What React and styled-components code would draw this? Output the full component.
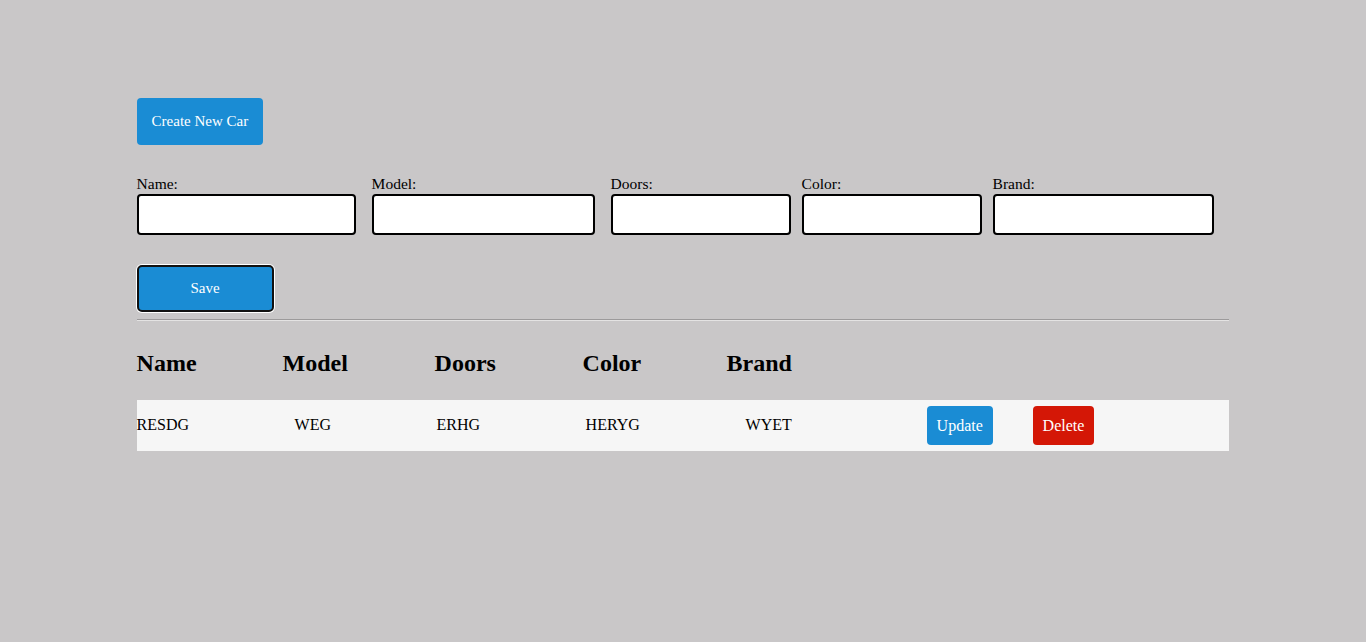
import styled, { createGlobalStyle } from 'styled-components'

const GlobalStyle = createGlobalStyle`
  html, body {
    margin: 0;
    padding: 0;
    background: #c9c7c8;
    font-family: "Liberation Serif", "Times New Roman", serif;
    color: #000;
  }
`

const Page = styled.div`
  width: 80%;
  margin: 0 auto;
  padding-top: 98px;
  padding-bottom: 190px;
`

const CreateButton = styled.button`
  display: block;
  height: 47px;
  padding: 0 15px;
  background: #1a8cd4;
  color: #fff;
  border: none;
  border-radius: 4px;
  font-family: inherit;
  font-size: 15px;
`

const FieldRow = styled.div`
  display: flex;
  margin-top: 30px;
`

const Field = styled.div`
  display: flex;
  flex-direction: column;
  margin-right: ${(p) => p.$gap || 0}px;
`

const Label = styled.label`
  font-size: 15.5px;
  line-height: 17px;
  padding-bottom: 2px;
`

const TextInput = styled.input`
  box-sizing: border-box;
  width: ${(p) => p.$w}px;
  height: 41px;
  border: 2px solid #000;
  border-radius: 4px;
  background: #fff;
`

const SaveButton = styled.button`
  display: block;
  box-sizing: border-box;
  width: 137px;
  height: 47px;
  margin-top: 30px;
  background: #1a8cd4;
  color: #fff;
  border: 2px solid #111;
  border-radius: 5px;
  box-shadow: 0 0 0 1px #fff;
  font-family: inherit;
  font-size: 15px;
`

const Divider = styled.hr`
  margin: 7px 0 0;
  border: none;
  border-top: 1px solid #9c9a9b;
  border-bottom: 1px solid #e4e3e3;
`

const HeaderRow = styled.div`
  display: grid;
  grid-template-columns: 146px 152px 148px 144px 1fr;
  margin: 28px 0 23px;
`

const HeaderCell = styled.h2`
  margin: 0;
  font-size: 24px;
  line-height: 28px;
  font-weight: bold;
`

const DataRow = styled.div`
  display: grid;
  grid-template-columns: 158px 142px 149px 160px 181px 106px 1fr;
  align-items: center;
  height: 51px;
  background: #f6f6f6;
`

const Cell = styled.div`
  font-size: 16px;
  line-height: 18px;
  padding-bottom: 1px;
`

const ActionButton = styled.button`
  justify-self: start;
  height: 39px;
  padding: 0 10px;
  border: none;
  border-radius: 4px;
  color: #fff;
  background: ${(p) => (p.$danger ? '#d41706' : '#1a8cd4')};
  font-family: inherit;
  font-size: 16px;
`

const fields = [
  { label: 'Name:', w: 219, gap: 16 },
  { label: 'Model:', w: 223, gap: 16 },
  { label: 'Doors:', w: 180, gap: 11 },
  { label: 'Color:', w: 180, gap: 11 },
  { label: 'Brand:', w: 221, gap: 0 },
]

const cars = [
  { name: 'RESDG', model: 'WEG', doors: 'ERHG', color: 'HERYG', brand: 'WYET' },
]

export default function App() {
  return (
    <>
      <GlobalStyle />
      <Page>
        <CreateButton>Create New Car</CreateButton>
        <FieldRow>
          {fields.map((f) => (
            <Field key={f.label} $gap={f.gap}>
              <Label>{f.label}</Label>
              <TextInput $w={f.w} />
            </Field>
          ))}
        </FieldRow>
        <SaveButton>Save</SaveButton>
        <Divider />
        <HeaderRow>
          <HeaderCell>Name</HeaderCell>
          <HeaderCell>Model</HeaderCell>
          <HeaderCell>Doors</HeaderCell>
          <HeaderCell>Color</HeaderCell>
          <HeaderCell>Brand</HeaderCell>
        </HeaderRow>
        {cars.map((car) => (
          <DataRow key={car.name}>
            <Cell>{car.name}</Cell>
            <Cell>{car.model}</Cell>
            <Cell>{car.doors}</Cell>
            <Cell>{car.color}</Cell>
            <Cell>{car.brand}</Cell>
            <ActionButton>Update</ActionButton>
            <ActionButton $danger>Delete</ActionButton>
          </DataRow>
        ))}
      </Page>
    </>
  )
}
